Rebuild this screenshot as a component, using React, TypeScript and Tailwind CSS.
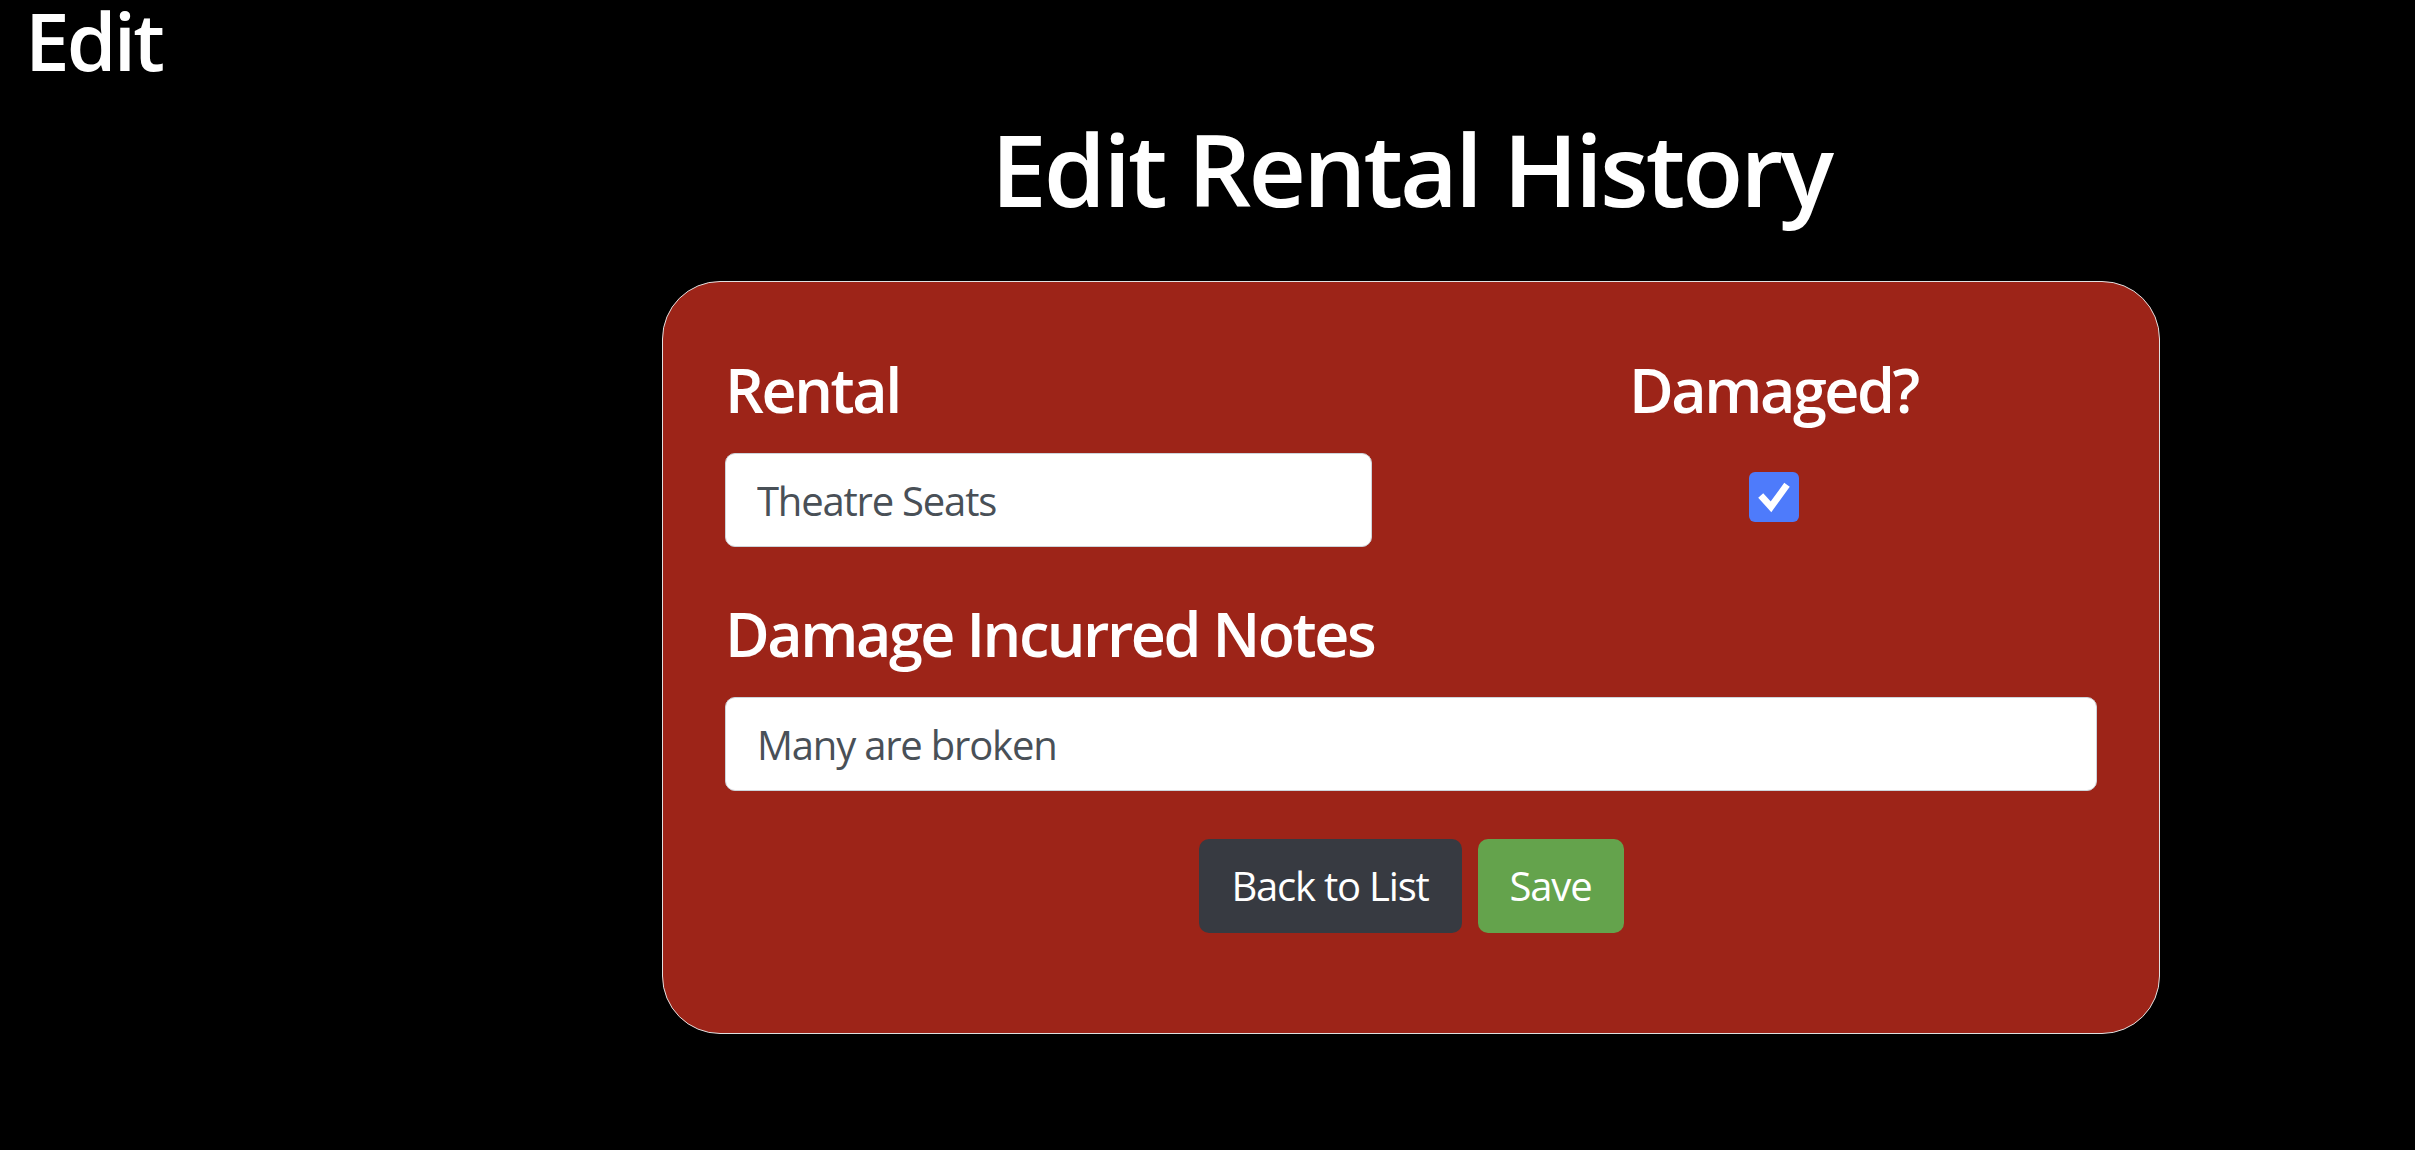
const inputCls =
  "w-full h-[94px] rounded-[10px] border border-[#ced4da] bg-white px-[31px] text-[40px] tracking-[-0.03em] text-[#495057] outline-none";

const labelCls = "text-[61px] font-semibold leading-none tracking-[-0.04em] text-white";

export default function App() {
  return (
    <div className="min-h-[1150px] bg-black text-white font-['Open_Sans',sans-serif]">
      <div className="pl-[25px] text-[80px] font-semibold leading-none tracking-[-0.035em]">Edit</div>

      <div className="ml-[662px] w-[1498px]">
        <h1 className="mt-[38px] mb-[63px] text-center text-[100px] font-semibold leading-none tracking-[-0.03em]">
          Edit Rental History
        </h1>

        <div className="rounded-[58px] border border-[#e0e0e0] bg-[#9d2418] px-[62px] pt-[77px] pb-[100px]">
          <div className="grid grid-cols-2 gap-x-[78px]">
            <div>
              <label className={labelCls}>Rental</label>
              <input className={`${inputCls} mt-[33px]`} defaultValue="Theatre Seats" readOnly />
            </div>
            <div className="flex flex-col items-center">
              <label className={labelCls}>Damaged?</label>
              <div className="mt-[52px] flex h-[50px] w-[50px] items-center justify-center rounded-[6px] bg-[#4e7bfb]">
                <svg viewBox="0 0 20 20" className="h-[40px] w-[40px]">
                  <path d="M4.5 10.5l4 4.4 7-9.6" fill="none" stroke="white" strokeWidth="3.4" strokeLinecap="square" />
                </svg>
              </div>
            </div>
          </div>

          <div className="mt-[56px]">
            <label className={labelCls}>Damage Incurred Notes</label>
            <input className={`${inputCls} mt-[33px]`} defaultValue="Many are broken" readOnly />
          </div>

          <div className="mt-[48px] flex justify-center gap-[16px]">
            <button className="h-[94px] w-[263px] rounded-[10px] bg-[#373a41] text-[40px] tracking-[-0.03em] text-white">
              Back to List
            </button>
            <button className="h-[94px] w-[146px] rounded-[10px] bg-[#64a34c] text-[40px] tracking-[-0.03em] text-white">
              Save
            </button>
          </div>
        </div>
      </div>
    </div>
  );
}
